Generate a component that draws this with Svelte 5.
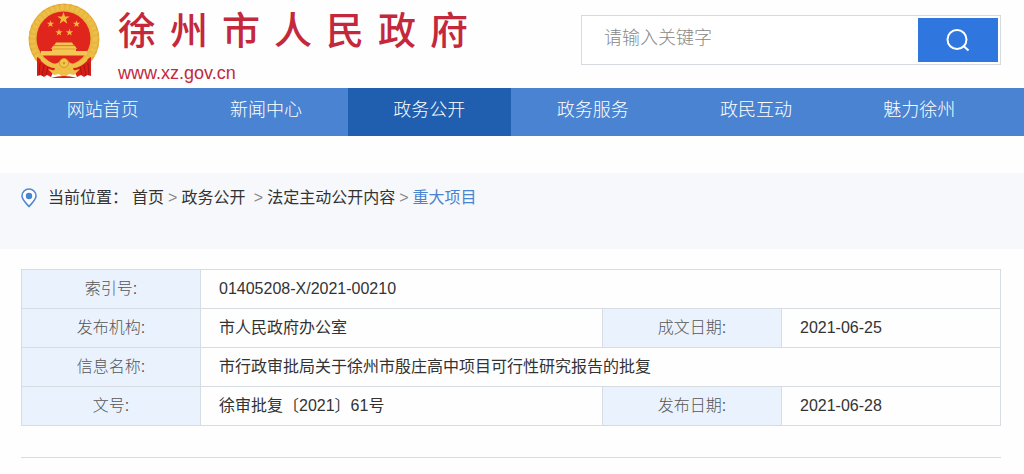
<script lang="ts">
  const siteName = '徐州市人民政府';

  const navItems = ['网站首页', '新闻中心', '政务公开', '政务服务', '政民互动', '魅力徐州'];
  let active = $state('政务公开');

  const crumbs = ['首页', '政务公开\u00a0', '法定主动公开内容'];

  let keyword = $state('');

  // five-pointed star around (cx, cy)
  function star(cx: number, cy: number, r: number): string {
    const pts: string[] = [];
    for (let i = 0; i < 10; i++) {
      const rad = i % 2 ? r * 0.4 : r;
      const a = -Math.PI / 2 + (i * Math.PI) / 5;
      pts.push(`${(cx + rad * Math.cos(a)).toFixed(2)},${(cy + rad * Math.sin(a)).toFixed(2)}`);
    }
    return pts.join(' ');
  }
</script>

<header class="wrap header">
  <a class="brand" href="#home">
    <svg class="emblem" viewBox="0 0 72 76" aria-hidden="true">
      <circle cx="36" cy="36" r="35.500" fill="#e8b640" />
      <circle cx="36" cy="36" r="31.500" fill="none" stroke="#eebf48" stroke-width="5" stroke-dasharray="3 2" />
      <circle cx="36" cy="36" r="34.500" fill="none" stroke="#dfa636" stroke-width="1" stroke-dasharray="3 3" />
      <circle cx="35.500" cy="35.500" r="27" fill="#e0261c" />
      <g fill="#f3b93a">
        <polygon points={star(35.5, 15.5, 6.5)} />
        <polygon points={star(22.5, 21, 3.8)} />
        <polygon points={star(48.5, 21, 3.8)} />
        <polygon points={star(31, 29.5, 3.8)} />
        <polygon points={star(41.5, 29.5, 3.8)} />
      </g>
      <g fill="#f5c653">
        <path d="M28 39.500h16l2 3H26zM25 43h22l2 3H23z" />
        <path d="M24 45.500h24v3H24zM13 48h46v4.500H13z" />
      </g>
      <path d="M25 42.700h22M24 46h24" stroke="#d98b21" stroke-width=".7" />
      <path d="M9 54l10 6 8 5-4 9-4-2-3 2-3-2-4 1z" fill="#d91e19" />
      <path d="M63 54l-10 6-8 5 4 9 4-2 3 2 3-2 4 1z" fill="#d91e19" />
      <path d="M12 60l-1 12M16 62l-2 11M20 64l-2 8M60 60l1 12M56 62l2 11M52 64l2 8" stroke="#a4150f" stroke-width="1" fill="none" />
      <path d="M11 52q7 5 12 8 6 2 9-2h8q3 4 9 2 5-3 12-8l-2 6q-8 8-16 7l-7 2-7-2q-8 1-16-7z" fill="#efbf48" />
      <path d="M20 66l8 2 8-3 8 3 8-2-6 6-5-1-5 4-5-4-5 1z" fill="#efbf48" />
      <path d="M23 75q13-4 26 0z" fill="#d91e19" />
      <circle cx="36" cy="60" r="4.500" fill="#f5ca4b" stroke="#cf9130" stroke-width="1" />
      <circle cx="36" cy="60" r="1.500" fill="#d89a30" />
    </svg>
    <span class="brand-text">
      <span class="site-name">
        {#each siteName as ch}<span>{ch}</span>{/each}
      </span>
      <span class="site-url">www.xz.gov.cn</span>
    </span>
  </a>

  <form class="search" onsubmit={(e) => e.preventDefault()}>
    <input type="text" placeholder="请输入关键字" aria-label="请输入关键字" bind:value={keyword} />
    <button type="submit" aria-label="搜索">
      <svg viewBox="0 0 24 24" width="24" height="24" fill="none" stroke="#fff" stroke-width="2">
        <circle cx="11" cy="11.500" r="9.500" />
        <path d="M17 17.500l5.500 5" />
      </svg>
    </button>
  </form>
</header>

<nav class="nav">
  <div class="wrap nav-inner">
    {#each navItems as item}
      <a href="#{item}" class:active={item === active} onclick={() => (active = item)}>{item}</a>
    {/each}
  </div>
</nav>

<div class="location">
  <div class="wrap crumbs">
    <svg class="pin" viewBox="0 0 16 20" aria-hidden="true">
      <path d="M8 18.500C4.500 14.500 1 11.500 1 8a7 7 0 0 1 14 0c0 3.500-3.500 6.500-7 10.500z" fill="#fff" stroke="#5288d2" stroke-width="1.600" />
      <circle cx="8" cy="8" r="3.200" fill="#4a83d0" />
    </svg>
    <span class="label">当前位置：</span>
    {#each crumbs as crumb}
      <a href="#{crumb.trim()}">{crumb}</a>
      <span class="sep">&gt;</span>
    {/each}
    <a class="current" href="#重大项目">重大项目</a>
  </div>
</div>

<main class="wrap">
  <table class="info">
    <colgroup>
      <col class="col-label" />
      <col class="col-wide" />
      <col class="col-label" />
      <col />
    </colgroup>
    <tbody>
      <tr>
        <th scope="row">索引号:</th>
        <td colspan="3">01405208-X/2021-00210</td>
      </tr>
      <tr>
        <th scope="row">发布机构:</th>
        <td>市人民政府办公室</td>
        <th scope="row">成文日期:</th>
        <td>2021-06-25</td>
      </tr>
      <tr>
        <th scope="row">信息名称:</th>
        <td colspan="3">市行政审批局关于徐州市殷庄高中项目可行性研究报告的批复</td>
      </tr>
      <tr>
        <th scope="row">文号:</th>
        <td>徐审批复〔2021〕61号</td>
        <th scope="row">发布日期:</th>
        <td>2021-06-28</td>
      </tr>
    </tbody>
  </table>
  <hr />
</main>

<style>
  :global(body) { background:#fefefe;color:#333;font-family:"Liberation Sans","Noto Sans CJK SC",sans-serif;font-size:16px }
  a { color:inherit;text-decoration:none }
  .wrap { margin:0 23px 0 21px }

  .header { display:flex;justify-content:space-between;align-items:flex-start;height:88px }
  .brand { display:flex;gap:18px;padding:3px 0 0 7px;color:#c4283c }
  .emblem { width:72px;height:76px }
  .brand-text { display:flex;flex-direction:column }
  .site-name { display:flex;gap:14px;font-size:38px;line-height:56px;font-weight:500 }
  .site-url { font-size:18px;line-height:28px }

  .search { display:flex;flex:0 1 420px;box-sizing:border-box;height:50px;margin-top:15px;padding:2px;border:1px solid #d6d9de;background:#fff }
  .search input { flex:1;min-width:0;border:0;outline:0;padding:0 20px 4px;background:none;font-family:inherit;font-size:18px;font-weight:300;color:#333 }
  .search input::placeholder { color:#888;opacity:1 }
  .search button { display:flex;align-items:center;justify-content:center;width:80px;border:0;padding:0;background:#2f77de;cursor:pointer }

  .nav { background:#4a83d1 }
  .nav-inner { display:grid;grid-template-columns:repeat(6,1fr) }
  .nav a { padding-bottom:4px;line-height:44px;text-align:center;font-size:18px;font-weight:300;color:#fff }
  .nav a.active { background:#205eaf }

  .location { margin-top:37px;padding:13px 0 39px;background:#f6f8fc }
  .crumbs { display:flex;align-items:center;gap:4px;line-height:24px }
  .pin { width:16px;height:20px;margin-right:7px }
  .sep { color:#888 }
  .current { color:#4a83d0 }

  .info { width:100%;margin-top:20px;border-collapse:collapse;table-layout:fixed }
  .col-label { width:179px }
  .col-wide { width:402px }
  .info th, .info td { box-sizing:border-box;height:39px;padding:0 18px;border:1px solid #d7dbe2;line-height:24px }
  .info th { padding:0;background:#eaf2fd;font-weight:300;color:#555;text-align:center }
  hr { height:1px;margin:31px 0 15px;border:0;background:#d9dce0 }
</style>
